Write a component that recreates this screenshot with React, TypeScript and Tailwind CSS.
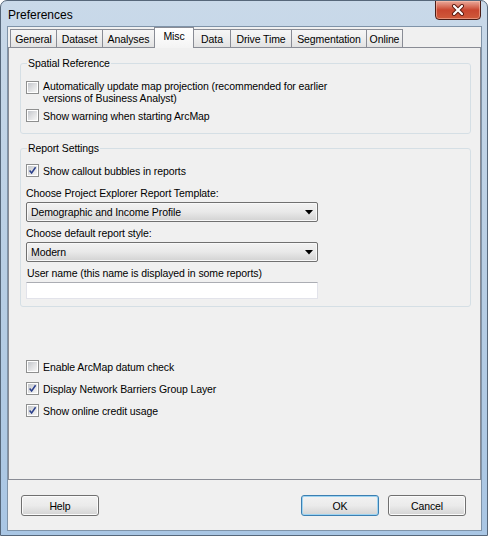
import React from 'react';

const tabs = [
  { label: 'General', w: 'w-[47px]' },
  { label: 'Dataset', w: 'w-[47px]' },
  { label: 'Analyses', w: 'w-[53px]' },
  { label: 'Misc', w: 'w-[40px]', active: true },
  { label: 'Data', w: 'w-[38px]' },
  { label: 'Drive Time', w: 'w-[62px]' },
  { label: 'Segmentation', w: 'w-[76px]' },
  { label: 'Online', w: 'w-[37px]' },
];

const CheckBox = ({ checked }: { checked?: boolean }) => (
  <span className="relative block w-[13px] h-[13px] shrink-0 border border-[#8e8f8f] bg-white">
    <span className="absolute inset-[1px] bg-gradient-to-br from-[#c3c6cb] via-[#dfe0e2] to-[#f6f6f6]" />
    {checked && (
      <svg className="absolute inset-0" width="11" height="11" viewBox="0 0 11 11">
        <path d="M2.6 5.6 L4.6 8 L8.6 2.2" fill="none" stroke="#2a3f8c" strokeWidth="1.5" />
      </svg>
    )}
  </span>
);

const CheckRow = ({ checked, children }: { checked?: boolean; children: React.ReactNode }) => (
  <label className="flex items-center gap-[4px] h-[13px]">
    <CheckBox checked={checked} />
    <span className="leading-[12px]">{children}</span>
  </label>
);

const Combo = ({ value }: { value: string }) => (
  <div className="relative flex items-center w-[292px] h-[20px] rounded-[2px] border border-[#707070] bg-gradient-to-b from-[#f2f2f2] via-[#e9e9e9] to-[#d2d2d2] shadow-[inset_0_0_0_1px_#f8f8f8] pl-[4px]">
    <span className="leading-[12px]">{value}</span>
    <svg className="absolute right-[4px] top-[7px]" width="8" height="5" viewBox="0 0 8 5">
      <path d="M0 0 H8 L4 4.5 Z" fill="#000" />
    </svg>
  </div>
);

const WinButton = ({ label, primary }: { label: string; primary?: boolean }) => (
  <button
    type="button"
    className={`w-[78px] h-[21px] rounded-[3px] border leading-[12px] text-black bg-gradient-to-b from-[#f2f2f2] via-[#ebebeb] to-[#d3d3d3] ${
      primary
        ? 'border-[#3c7fb1] shadow-[inset_0_0_0_1px_#9ed4f2]'
        : 'border-[#707070] shadow-[inset_0_0_0_1px_#fbfbfb]'
    }`}
  >
    {label}
  </button>
);

export default function App() {
  return (
    <div className="w-[488px] h-[536px] flex flex-col rounded-t-[7px] border border-[#56677a] bg-gradient-to-b from-[#c9d9e9] via-[#b8cee4] to-[#a9c6e4] font-['Liberation_Sans',Arial,sans-serif] text-[10.5px] tracking-[-0.1px] text-black overflow-hidden">
      {/* Title bar */}
      <div className="relative h-[25px] shrink-0">
        <span className="absolute left-[7px] top-[7px] text-[12px] tracking-normal leading-[14px] text-black">Preferences</span>
        <div className="absolute right-[6px] -top-[1px] w-[46px] h-[20px] rounded-b-[4px] border border-[#4b1d16] bg-gradient-to-b from-[#e9a99b] via-[#c9462f] to-[#cf5a3b] flex items-center justify-center shadow-[inset_0_0_0_1px_rgba(255,200,180,0.5)]">
          <svg width="14" height="12" viewBox="0 0 14 12">
            <path d="M3 2 L11 10 M11 2 L3 10" stroke="#5a1a10" strokeWidth="4" strokeLinecap="round" />
            <path d="M3 2 L11 10 M11 2 L3 10" stroke="#ffffff" strokeWidth="2.2" strokeLinecap="round" />
          </svg>
        </div>
      </div>

      {/* Client area */}
      <div className="ml-[6px] mr-[5px] h-[505px] border border-[#7f93a8] bg-[#f0f0f0] flex flex-col">
        {/* Tab strip */}
        <div className="h-[20px] flex items-end pl-[2px] shrink-0">
          {tabs.map((t) =>
            t.active ? (
              <div
                key={t.label}
                className={`${t.w} relative z-10 h-[21px] -mb-[1px] -mr-[1px] border border-b-0 border-[#898c95] bg-gradient-to-b from-[#ffffff] to-[#f4f4f4] flex justify-center pt-[2px] leading-[13px]`}
              >
                {t.label}
              </div>
            ) : (
              <div
                key={t.label}
                className={`${t.w} h-[18px] -mr-[1px] border border-b-0 border-[#898c95] bg-gradient-to-b from-[#f6f6f6] via-[#eeeeee] to-[#e2e2e2] flex justify-center pt-[3px] leading-[13px]`}
              >
                {t.label}
              </div>
            )
          )}
        </div>

        {/* Tab page */}
        <div className="h-[433px] border border-[#898c95] shrink-0 flex flex-col pl-[11px]">
          {/* Spatial Reference */}
          <div className="relative mt-[15px] w-[451px] h-[71px] rounded-[3px] border border-[#d5dfe5] pl-[5px] pt-[16px]">
            <span className="absolute left-[6px] -top-[7px] px-[1px] bg-[#f0f0f0] leading-[12px]">Spatial Reference</span>
            <div className="flex gap-[4px]">
              <span className="mt-[1px]">
                <CheckBox />
              </span>
              <span className="leading-[12px]">
                Automatically update map projection (recommended for earlier
                <br />
                versions of Business Analyst)
              </span>
            </div>
            <div className="mt-[5px]">
              <CheckRow>Show warning when starting ArcMap</CheckRow>
            </div>
          </div>

          {/* Report Settings */}
          <div className="relative mt-[14px] w-[451px] h-[159px] rounded-[3px] border border-[#d5dfe5] pl-[5px] pt-[15px]">
            <span className="absolute left-[6px] -top-[7px] px-[1px] bg-[#f0f0f0] leading-[12px]">Report Settings</span>
            <CheckRow checked>Show callout bubbles in reports</CheckRow>
            <div className="mt-[10px] leading-[12px]">Choose Project Explorer Report Template:</div>
            <div className="mt-[3px]">
              <Combo value="Demographic and Income Profile" />
            </div>
            <div className="mt-[5px] leading-[12px]">Choose default report style:</div>
            <div className="mt-[3px]">
              <Combo value="Modern" />
            </div>
            <div className="mt-[5px] pl-[1px] leading-[12px]">User name (this name is displayed in some reports)</div>
            <div className="mt-[3px] w-[292px] h-[17px] bg-white border border-[#e2e3ea] border-t-[#abadb3]" />
          </div>

          {/* Misc options */}
          <div className="mt-[53px] pl-[6px] flex flex-col gap-[9px]">
            <CheckRow>Enable ArcMap datum check</CheckRow>
            <CheckRow checked>Display Network Barriers Group Layer</CheckRow>
            <CheckRow checked>Show online credit usage</CheckRow>
          </div>
        </div>

        {/* Buttons */}
        <div className="mt-[15px] flex items-center justify-between pl-[13px] pr-[15px]">
          <WinButton label="Help" />
          <div className="flex gap-[9px]">
            <WinButton label="OK" primary />
            <WinButton label="Cancel" />
          </div>
        </div>
      </div>
    </div>
  );
}
